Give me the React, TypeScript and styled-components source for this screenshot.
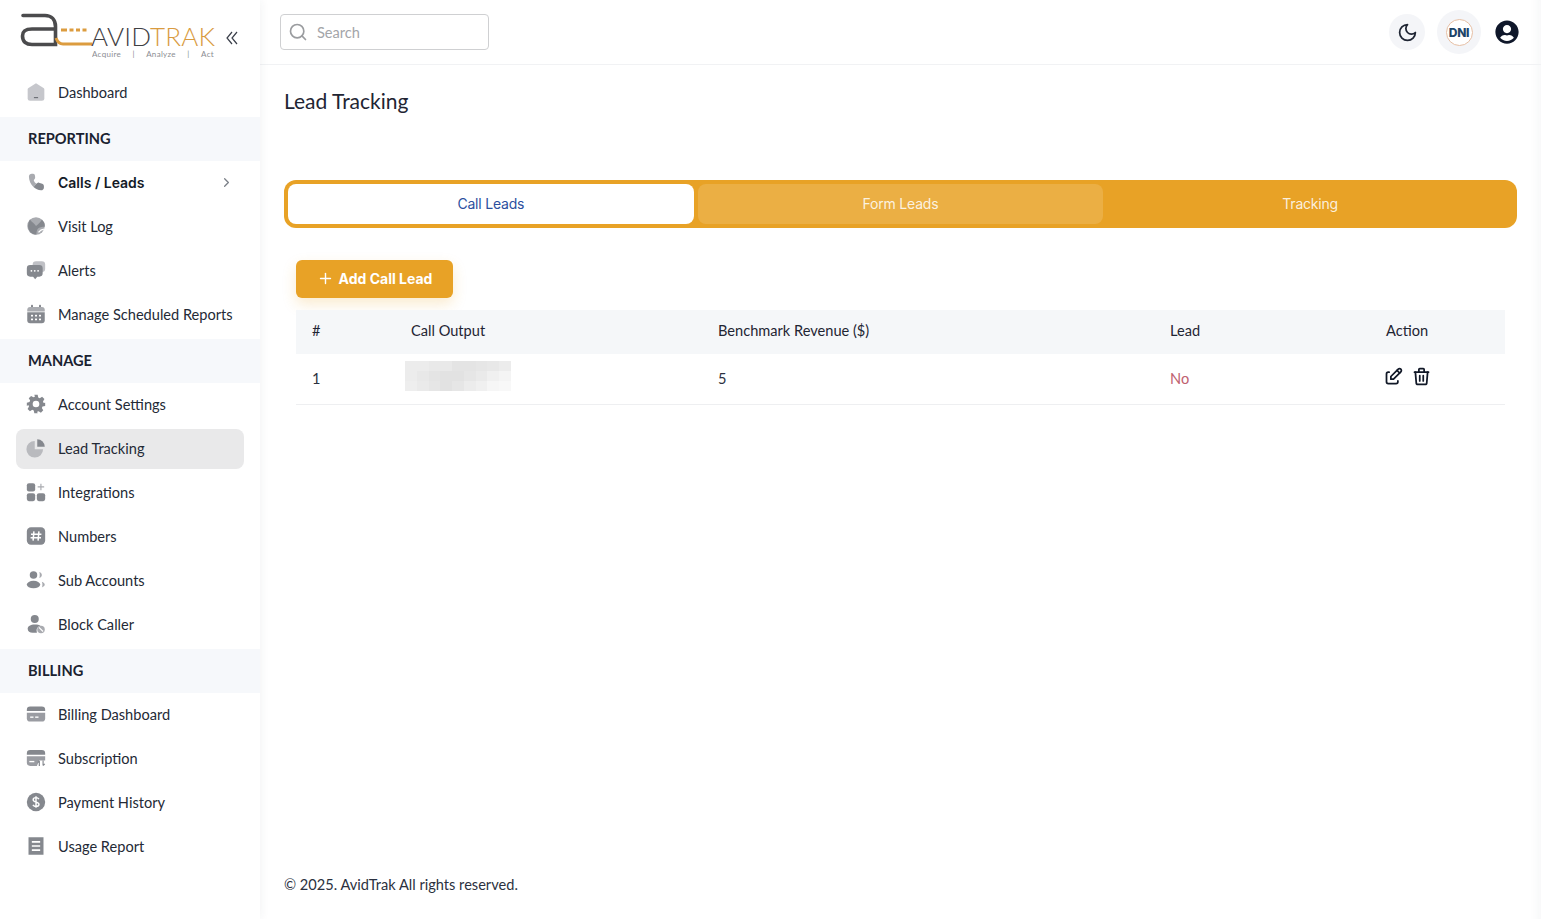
import React from 'react'
import styled, { createGlobalStyle } from 'styled-components'
import { LuChevronRight, LuPlus, LuMoon, LuSearch } from 'react-icons/lu'
import { TbEdit, TbTrash } from 'react-icons/tb'
import { FaUserCircle } from 'react-icons/fa'

const GlobalStyle = createGlobalStyle`
    * { box-sizing: border-box; }
    body {
        margin: 0;
        background: #fff;
        color: #1f2533;
        font-family: "Lato", "Noto Sans", sans-serif;
        font-size: 14.6px;
    }
`

const Page = styled.div`
    display: flex;
    height: 919px;
    overflow: hidden;
`

const Sidebar = styled.aside`
    flex: 0 0 260px;
    min-width: 0;
    background: #fff;
    box-shadow: 0 0 10px rgba(40, 50, 70, 0.07);
    z-index: 2;
`

const Brand = styled.div`
    height: 70px;
    padding: 10px 22px 0 20px;
    display: flex;
    align-items: flex-start;
    justify-content: space-between;
`

const LogoWrap = styled.div`
    position: relative;
    width: 196px;
    height: 54px;
`

const LogoWord = styled.div`
    position: absolute;
    left: 71px;
    top: 11px;
    font-family: "Lato", sans-serif;
    font-weight: 300;
    font-size: 26px;
    line-height: 30px;
    letter-spacing: 0.2px;
    color: #3f4043;
    white-space: nowrap;
    span { color: #d99b3f; }
`

const LogoTag = styled.div`
    position: absolute;
    left: 72px;
    top: 39px;
    width: 122px;
    height: 11px;
    overflow: hidden;
    display: flex;
    justify-content: space-between;
    font-size: 8px;
    line-height: 11px;
    letter-spacing: 0.3px;
    color: #8b8d92;
`

const Collapse = styled.button`
    border: 0;
    background: none;
    padding: 0;
    margin: 21px 0 0 0;
    line-height: 0;
    color: #3a3f4a;
`

const NavRow = styled.div<{ $active?: boolean }>`
    height: ${p => (p.$active ? '40px' : '44px')};
    margin: ${p => (p.$active ? '3px 16px 1px' : '0 16px')};
    padding: ${p => (p.$active ? '0 12px 2px 10px' : '0 12px 0 10px')};
    display: flex;
    align-items: center;
    gap: 12px;
    border-radius: 8px;
    background: ${p => (p.$active ? '#e9e9ea' : 'transparent')};
    color: #242a36;
`

const NavLabel = styled.span<{ $bold?: boolean }>`
    flex: 1;
    white-space: nowrap;
    font-family: ${p => (p.$bold ? '"Inter", sans-serif' : 'inherit')};
    font-size: ${p => (p.$bold ? '14px' : 'inherit')};
    font-weight: ${p => (p.$bold ? 600 : 400)};
    color: ${p => (p.$bold ? '#141a26' : 'inherit')};
`

const NavCaret = styled.span`
    display: flex;
    font-size: 15px;
    color: #7a7f87;
    margin-right: -2px;
`

const IconBox = styled.svg`
    flex: 0 0 20px;
    width: 20px;
    height: 20px;
    fill: #85888e;
`

const Band = styled.div`
    height: 44px;
    margin-top: 3px;
    padding: 0 28px 2px;
    display: flex;
    align-items: center;
    background: #f6f8fb;
    font-weight: 700;
    font-size: 14.6px;
    color: #1a2230;
`

const Section = styled.div`
    margin-top: -1px;
`

const Main = styled.div`
    flex: 1;
    min-width: 0;
    display: flex;
    flex-direction: column;
    box-shadow: inset -14px 0 12px -12px rgba(40, 50, 70, 0.05);
`

const Topbar = styled.header`
    height: 65px;
    flex: 0 0 65px;
    padding: 0 22px 0 20px;
    display: flex;
    align-items: center;
    justify-content: space-between;
    border-bottom: 1px solid #f1f2f4;
`

const SearchBox = styled.label`
    width: 209px;
    height: 36px;
    padding: 0 7px;
    display: flex;
    align-items: center;
    gap: 9px;
    border: 1px solid #cfd0d2;
    border-radius: 4px;
    font-size: 20px;
    color: #9a9c9f;
`

const SearchText = styled.span`
    font-size: 14.6px;
    color: #a3a5a9;
`

const TopActions = styled.div`
    display: flex;
    align-items: center;
`

const RoundButton = styled.div<{ $size: number; $gap?: number }>`
    width: ${p => p.$size}px;
    height: ${p => p.$size}px;
    margin-left: ${p => p.$gap ?? 0}px;
    border-radius: 50%;
    background: #f4f5f8;
    display: flex;
    align-items: center;
    justify-content: center;
    color: #1f2533;
    font-size: 21px;
`

const DniRing = styled.div`
    width: 27px;
    height: 27px;
    border-radius: 50%;
    border: 1px solid #e6bfa4;
    background: #fff;
    display: flex;
    align-items: center;
    justify-content: center;
    font-family: "Inter", sans-serif;
    font-size: 12px;
    font-weight: 800;
    letter-spacing: -0.3px;
    color: #1d4468;
`

const UserIcon = styled.div`
    display: flex;
    margin-left: 14px;
    font-size: 24px;
    color: #0f172a;
`

const Content = styled.main`
    flex: 1;
    padding: 0 24px;
    display: flex;
    flex-direction: column;
`

const Title = styled.h1`
    margin: 22px 0 0;
    font-size: 21px;
    line-height: 27px;
    font-weight: 400;
    color: #1f2533;
`

const TabBar = styled.div`
    margin-top: 66px;
    padding: 4px;
    display: grid;
    grid-template-columns: repeat(3, 1fr);
    gap: 4px;
    background: #e8a226;
    border-radius: 12px;
`

const Tab = styled.div<{ $state: 'on' | 'hover' | 'off' }>`
    height: 40px;
    padding-bottom: 1px;
    display: flex;
    align-items: center;
    justify-content: center;
    border-radius: 8px;
    font-family: "Inter", "Liberation Sans", sans-serif;
    font-size: 14px;
    letter-spacing: -0.2px;
    color: ${p => (p.$state === 'on' ? '#2c4f9e' : 'rgba(255, 255, 255, 0.85)')};
    background: ${p =>
        p.$state === 'on' ? '#fff' : p.$state === 'hover' ? 'rgba(255, 255, 255, 0.14)' : 'transparent'};
`

const Panel = styled.section`
    padding: 32px 12px 0;
`

const AddButton = styled.button`
    width: 157px;
    height: 38px;
    padding: 0 0 2px;
    border: 0;
    border-radius: 6px;
    background: #e8a226;
    color: #fff;
    display: flex;
    align-items: center;
    justify-content: center;
    gap: 5px;
    font-family: "Inter", "Liberation Sans", sans-serif;
    font-size: 14px;
    font-weight: 700;
    box-shadow: 0 6px 14px rgba(232, 162, 38, 0.22);
    svg { font-size: 17px; }
`

const Table = styled.table`
    width: 100%;
    margin-top: 12px;
    border-collapse: collapse;
    table-layout: fixed;
`

const HeadCell = styled.th<{ $w?: number }>`
    width: ${p => (p.$w ? `${p.$w}px` : 'auto')};
    height: 44px;
    padding: 0 16px 3px;
    background: #f5f7f9;
    text-align: left;
    font-weight: 400;
    color: #1f2533;
`

const Cell = styled.td`
    height: 50px;
    padding: 0 16px;
    border-bottom: 1px solid #eeeff1;
    color: #2b3140;
`

const NoCell = styled(Cell)`
    color: #c0616f;
`

const Redacted = styled.div`
    width: 106px;
    height: 30px;
    margin: 0 0 5px -6px;
    display: grid;
    grid-template-columns: repeat(9, 1fr);
    grid-template-rows: repeat(3, 1fr);
`

const RedactedPixel = styled.i<{ $shade: number }>`
    display: block;
    background: rgb(${p => p.$shade}, ${p => p.$shade}, ${p => p.$shade});
`

const Actions = styled.div`
    display: flex;
    gap: 7px;
    margin: -5px 0 0 -3px;
    color: #111827;
    svg { display: block; width: 21px; height: 21px; }
`

const Footer = styled.footer`
    margin-top: auto;
    padding-bottom: 25px;
    color: #2b3140;
    line-height: 19px;
`

type IconName = keyof typeof iconPaths

const iconPaths = {
    dashboard: (
        <>
            <path fill="#c6c7cc" d="M12 1.500 21 7.200c.6.4 1 1 1 1.700V19.500a3 3 0 0 1-3 3H5a3 3 0 0 1-3-3V8.900c0-.7.4-1.300 1-1.700z" />
            <rect x="9.500" y="18" width="5" height="1.400" fill="#6e7177" />
        </>
    ),
    phone: (
        <>
            <path fill="#a9abb0" d="M3.500 5.500C3.500 3.500 5 2 7 2h1.500C10 2 10.500 3 10.800 4.500L11 7c0 1-1 2-1.700 2.800.5 1.700 1.500 3.200 3.200 4.200L9 18C5.500 15 3.500 10 3.500 5.500z" />
            <path d="M12.500 14c1-.5 2-1.500 3-1.200l4 1.200c1.500.5 2 1.500 2 3v1.500c0 2-1.500 3.500-3.500 3.500-3.500-.2-6.500-2-9-4z" />
        </>
    ),
    globe: (
        <>
            <circle cx="12" cy="12" r="10.500" fill="#a9abb0" />
            <path d="M5 4.500c2 3 5 4.400 7 7.500 2.500-2 5-4 7-7.500 2.600 2 4 5 3.400 8.500-3.400-.8-6.400.4-8.400 2.500-1 1.600-1.500 4-1.500 6.800-5.500 0-10-4.500-10-10 0-3.300 1-6 2.500-8.300z" />
            <path d="M15 19.500c1.500-2 3.500-3.500 6.500-3.800" stroke="#fff" strokeWidth="1.500" fill="none" />
        </>
    ),
    alerts: (
        <>
            <rect x="8" y="1.500" width="15" height="13" rx="4" fill="#bfc0c5" />
            <path d="M5 6h11a4 4 0 0 1 4 4v6a4 4 0 0 1-4 4h-2.500L11 23l-2.500-3H5a4 4 0 0 1-4-4v-6a4 4 0 0 1 4-4z" />
            <circle cx="6.500" cy="13" r="1.100" fill="#fff" /><circle cx="10.500" cy="13" r="1.100" fill="#fff" /><circle cx="14.500" cy="13" r="1.100" fill="#fff" />
        </>
    ),
    calendar: (
        <>
            <rect x="6" y="1" width="2.400" height="5" rx="1" /><rect x="15.600" y="1" width="2.400" height="5" rx="1" />
            <path d="M5 3.500h14a3.500 3.500 0 0 1 3.500 3.500v2h-21V7A3.500 3.500 0 0 1 5 3.500z" fill="#a9abb0" />
            <path d="M1.500 10h21v9.500A3.500 3.500 0 0 1 19 23H5a3.500 3.500 0 0 1-3.500-3.500z" />
            <g fill="#fff">
                <rect x="6" y="13" width="2.400" height="2" /><rect x="10.800" y="13" width="2.400" height="2" /><rect x="15.600" y="13" width="2.400" height="2" />
                <rect x="6" y="17.500" width="2.400" height="2" /><rect x="10.800" y="17.500" width="2.400" height="2" /><rect x="15.600" y="17.500" width="2.400" height="2" />
            </g>
        </>
    ),
    gear: (
        <path
            fillRule="evenodd"
            d="M10 1h4l.7 3.200 1.800.8 2.800-1.700 2.800 2.800-1.700 2.800.8 1.800L23 10.500v3.800l-3.200.7-.8 1.800 1.700 2.800-2.800 2.800-2.800-1.700-1.800.7L14 23h-4l-.7-3.300-1.800-.7-2.800 1.700-2.800-2.800 1.700-2.800-.8-1.800L1 14.300v-3.800l3.200-.8.8-1.800-1.700-2.800 2.800-2.800 2.800 1.700 1.800-.8zM12 8a4 4 0 1 0 0 8 4 4 0 0 0 0-8z"
        />
    ),
    pie: (
        <>
            <path fill="#b9babe" d="M10.500 3.500v10h10A10 10 0 1 1 10.500 3.500z" />
            <path fill="#85888e" d="M13.500 1.500A9 9 0 0 1 22.500 10.500h-9z" />
        </>
    ),
    apps: (
        <>
            <rect x="1" y="1.500" width="10" height="10" rx="2.500" />
            <rect x="1" y="13.500" width="10" height="9.500" rx="2.500" />
            <rect x="13" y="13.500" width="10" height="9.500" rx="2.500" />
            <path d="M17.200 2h1.400v3.200h3.200v1.400h-3.200v3.200h-1.400V6.600H14V5.200h3.200z" fill="#a9abb0" />
        </>
    ),
    hash: (
        <>
            <rect x="1" y="1.500" width="22" height="21" rx="5" />
            <path d="M9.500 6.500 8.500 17.500M15.500 6.500l-1 11M6 10h12.500M5.500 14h12.500" stroke="#fff" strokeWidth="1.800" fill="none" />
        </>
    ),
    users: (
        <>
            <circle cx="9" cy="6" r="4.500" />
            <ellipse cx="9" cy="17.500" rx="8" ry="4.500" />
            <path d="M16 2.500c2 .6 3 2 3 3.500s-1 3-3 3.500c.7-2 .7-5 0-7zM19 14c2 .8 3.500 2 3.500 3.500S21 20.200 19 21c1-2 1-5 0-7z" fill="#a9abb0" />
        </>
    ),
    block: (
        <>
            <circle cx="10.500" cy="6" r="4.800" />
            <path d="M10.500 12.500c3 0 5.400.6 7 1.600a6 6 0 0 0-4.400 8.400H8c-3.500 0-6-1.800-6-4.800s3.500-5.200 8.500-5.200z" />
            <circle cx="18" cy="18.500" r="4.500" fill="#a9abb0" />
            <path d="m15.500 16 5 5" stroke="#fff" strokeWidth="1.400" />
        </>
    ),
    card: (
        <>
            <path d="M5 3h14a4 4 0 0 1 4 4v1.500H1V7a4 4 0 0 1 4-4z" />
            <path d="M1 10.500h22V17a4 4 0 0 1-4 4H5a4 4 0 0 1-4-4z" fill="#9a9ca2" />
            <rect x="5" y="15" width="4" height="1.600" fill="#fff" /><rect x="11" y="15" width="4" height="1.600" fill="#fff" />
        </>
    ),
    subscription: (
        <>
            <path d="M5 2.500h14a4 4 0 0 1 4 4V8H1V6.500a4 4 0 0 1 4-4z" />
            <path d="M1 10h22v5h-7l-3 6.500H5a4 4 0 0 1-4-4z" fill="#9a9ca2" />
            <rect x="4" y="15.500" width="6" height="1.600" fill="#fff" />
            <path d="M16 21.500v-6M16 15.500l-2 2M20.500 15v6M20.500 21l2-2" stroke="#85888e" strokeWidth="1.400" fill="none" />
        </>
    ),
    dollar: (
        <>
            <circle cx="12" cy="12" r="11" />
            <path d="M15.500 8.500c-.8-1.200-2-1.800-3.500-1.800-2 0-3.400 1-3.400 2.600 0 3.800 7 1.800 7 5.400 0 1.600-1.500 2.600-3.600 2.600-1.600 0-2.900-.7-3.700-1.900M12 5v14" stroke="#fff" strokeWidth="1.700" fill="none" />
        </>
    ),
    report: (
        <>
            <path d="M3 1.500h18v21H3z" />
            <path d="M7 7h10M7 12h10M7 17h10" stroke="#fff" strokeWidth="2" fill="none" />
        </>
    ),
}

const NavIcon: React.FC<{ name: IconName }> = ({ name }) => (
    <IconBox viewBox="0 0 24 24">{iconPaths[name]}</IconBox>
)

const NavItem: React.FC<{ icon: IconName; label: string; bold?: boolean; active?: boolean; caret?: boolean }> = ({
    icon,
    label,
    bold,
    active,
    caret,
}) => (
    <NavRow $active={active}>
        <NavIcon name={icon} />
        <NavLabel $bold={bold}>{label}</NavLabel>
        {caret && (
            <NavCaret>
                <LuChevronRight />
            </NavCaret>
        )}
    </NavRow>
)

const Logo = () => (
    <LogoWrap>
        <svg width="90" height="40" viewBox="0 0 90 40" fill="none">
            <path
                d="M3 5.500h22c6.500 0 10.500 4.500 10.500 11v18H12c-6 0-9.500-3-9.500-8.500S6 19 12 19h23.500"
                stroke="#4b4b4d"
                strokeWidth="3.600"
                strokeLinecap="round"
            />
            <path d="M36 28c1.500 4 4 6 7 6h29" stroke="#dc9c3f" strokeWidth="3" />
            <path d="M41 20h6M49.500 20h4M56 20h4M62.500 20h4" stroke="#dc9c3f" strokeWidth="3" />
        </svg>
        <LogoWord>
            AVID<span>TRAK</span>
        </LogoWord>
        <LogoTag>
            <span>Acquire</span>
            <span>|</span>
            <span>Analyze</span>
            <span>|</span>
            <span>Act</span>
        </LogoTag>
    </LogoWrap>
)

const pixels = [
    236, 236, 233, 233, 228, 228, 230, 232, 236,
    236, 232, 228, 226, 226, 230, 234, 240, 244,
    238, 234, 230, 226, 230, 236, 240, 246, 248,
]

const App: React.FC = () => (
    <>
        <GlobalStyle />
        <Page>
            <Sidebar>
                <Brand>
                    <Logo />
                    <Collapse>
                        <svg width="12" height="14" viewBox="0 0 12 14" fill="none" stroke="currentColor" strokeWidth="1.200">
                            <path d="M6 1 1 7l5 6M11 1 6 7l5 6" />
                        </svg>
                    </Collapse>
                </Brand>
                <NavItem icon="dashboard" label="Dashboard" />
                <Band>REPORTING</Band>
                <Section>
                    <NavItem icon="phone" label="Calls / Leads" bold caret />
                    <NavItem icon="globe" label="Visit Log" />
                    <NavItem icon="alerts" label="Alerts" />
                    <NavItem icon="calendar" label="Manage Scheduled Reports" />
                </Section>
                <Band>MANAGE</Band>
                <Section>
                    <NavItem icon="gear" label="Account Settings" />
                    <NavItem icon="pie" label="Lead Tracking" active />
                    <NavItem icon="apps" label="Integrations" />
                    <NavItem icon="hash" label="Numbers" />
                    <NavItem icon="users" label="Sub Accounts" />
                    <NavItem icon="block" label="Block Caller" />
                </Section>
                <Band>BILLING</Band>
                <Section>
                    <NavItem icon="card" label="Billing Dashboard" />
                    <NavItem icon="subscription" label="Subscription" />
                    <NavItem icon="dollar" label="Payment History" />
                    <NavItem icon="report" label="Usage Report" />
                </Section>
            </Sidebar>
            <Main>
                <Topbar>
                    <SearchBox>
                        <LuSearch />
                        <SearchText>Search</SearchText>
                    </SearchBox>
                    <TopActions>
                        <RoundButton $size={36}>
                            <LuMoon />
                        </RoundButton>
                        <RoundButton $size={44} $gap={12}>
                            <DniRing>DNI</DniRing>
                        </RoundButton>
                        <UserIcon>
                            <FaUserCircle />
                        </UserIcon>
                    </TopActions>
                </Topbar>
                <Content>
                    <Title>Lead Tracking</Title>
                    <TabBar>
                        <Tab $state="on">Call Leads</Tab>
                        <Tab $state="hover">Form Leads</Tab>
                        <Tab $state="off">Tracking</Tab>
                    </TabBar>
                    <Panel>
                        <AddButton>
                            <LuPlus />
                            Add Call Lead
                        </AddButton>
                        <Table>
                            <thead>
                                <tr>
                                    <HeadCell $w={99}>#</HeadCell>
                                    <HeadCell $w={307}>Call Output</HeadCell>
                                    <HeadCell $w={452}>Benchmark Revenue ($)</HeadCell>
                                    <HeadCell $w={216}>Lead</HeadCell>
                                    <HeadCell>Action</HeadCell>
                                </tr>
                            </thead>
                            <tbody>
                                <tr>
                                    <Cell>1</Cell>
                                    <Cell>
                                        <Redacted>
                                            {pixels.map((shade, i) => (
                                                <RedactedPixel key={i} $shade={shade} />
                                            ))}
                                        </Redacted>
                                    </Cell>
                                    <Cell>5</Cell>
                                    <NoCell>No</NoCell>
                                    <Cell>
                                        <Actions>
                                            <TbEdit />
                                            <TbTrash />
                                        </Actions>
                                    </Cell>
                                </tr>
                            </tbody>
                        </Table>
                    </Panel>
                    <Footer>© 2025. AvidTrak All rights reserved.</Footer>
                </Content>
            </Main>
        </Page>
    </>
)

export default App
